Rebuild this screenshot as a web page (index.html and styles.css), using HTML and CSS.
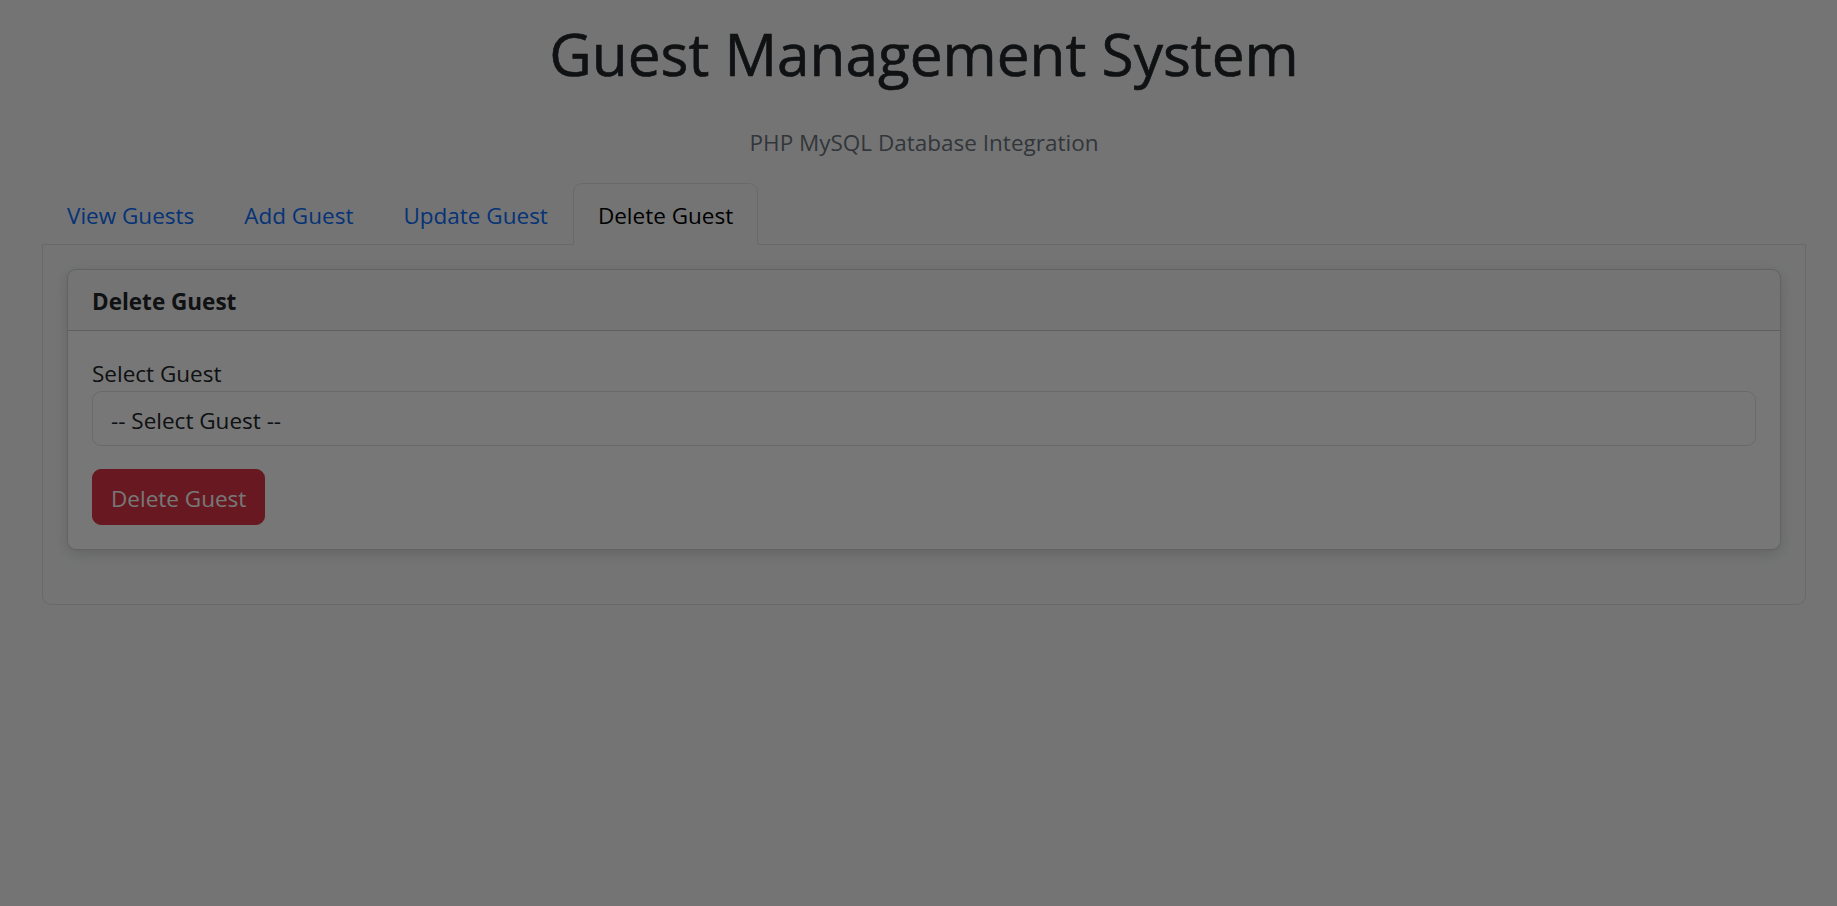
FILE: index.html
```html
<!DOCTYPE html>
<html lang="en">
<head>
<meta charset="utf-8">
<title>Guest Management System</title>
<link rel="stylesheet" href="styles.css">
</head>
<body>
<div class="page">
  <header class="masthead">
    <h1 class="title">Guest Management System</h1>
    <p class="subtitle">PHP MySQL Database Integration</p>
  </header>

  <ul class="tabs">
    <li><a class="tab-link" href="#">View Guests</a></li>
    <li><a class="tab-link" href="#">Add Guest</a></li>
    <li><a class="tab-link" href="#">Update Guest</a></li>
    <li><a class="tab-link active" href="#">Delete Guest</a></li>
  </ul>

  <div class="tab-content">
    <div class="card">
      <div class="card-header">Delete Guest</div>
      <div class="card-body">
        <form class="delete-form">
          <label class="form-label" for="guest">Select Guest</label>
          <select class="form-select" id="guest">
            <option>-- Select Guest --</option>
          </select>
          <button type="button" class="btn-danger">Delete Guest</button>
        </form>
      </div>
    </div>
  </div>
</div>
<div class="backdrop"></div>
</body>
</html>
```

FILE: styles.css
```css
html, body {
  margin: 0;
  padding: 0;
}

body {
  background: #f8f9fa;
  color: #212529;
  font-family: "Open Sans", "Noto Sans", sans-serif;
  font-size: 22.5px;
  line-height: 36px;
  min-height: 906px;
}

.page {
  padding: 0 31px 0 42px;
}

.masthead {
  text-align: center;
  padding-top: 20px;
}

.title {
  margin: 0 0 38px;
  font-size: 58.5px;
  line-height: 67px;
  font-weight: 400;
  -webkit-text-stroke: 0.6px #212529;
  color: #212529;
}

.subtitle {
  margin: 0 0 22px;
  color: #6c757d;
  font-size: 22.5px;
  line-height: 36px;
}

.tabs {
  list-style: none;
  margin: 0;
  padding: 0;
  display: flex;
  border-bottom: 1px solid #dee2e6;
}

.tabs li {
  margin-bottom: -1px;
}

.tab-link {
  display: block;
  padding: 14px 24px 10px;
  border: 1px solid transparent;
  border-radius: 9px 9px 0 0;
  color: #0d6efd;
  text-decoration: none;
}

.tab-link.active {
  color: #000;
  background: #f8f9fa;
  border-color: #dee2e6 #dee2e6 #f8f9fa;
}

.tab-content {
  border: 1px solid #dee2e6;
  border-top: 0;
  border-radius: 0 0 9px 9px;
  padding: 24px;
}

.card {
  background: #fff;
  border: 1px solid rgba(0, 0, 0, 0.175);
  border-radius: 9px;
  margin-bottom: 30px;
  box-shadow: 0 4px 14px rgba(0, 0, 0, 0.14);
}

.card-header {
  padding: 14px 24px 10px;
  background: rgba(33, 37, 41, 0.03);
  border-bottom: 1px solid rgba(0, 0, 0, 0.175);
  border-radius: 8px 8px 0 0;
  font-weight: 700;
}

.card-body {
  padding: 24px;
}

.delete-form {
  display: flex;
  flex-direction: column;
  align-items: flex-start;
  margin: 0;
}

.form-label {
  display: block;
  padding-top: 2px;
  line-height: 34px;
}

.form-select {
  -webkit-appearance: none;
  appearance: none;
  box-sizing: border-box;
  width: 100%;
  height: 55px;
  padding: 4px 18px 0;
  margin: 0 0 23px;
  font: inherit;
  line-height: 36px;
  color: #212529;
  background: #fff;
  border: 1px solid #dee2e6;
  border-radius: 9px;
}

.btn-danger {
  font: inherit;
  line-height: 36px;
  padding: 11px 18px 7px;
  color: #fff;
  background: #dc3545;
  border: 1px solid #dc3545;
  border-radius: 9px;
  cursor: pointer;
}

.backdrop {
  position: fixed;
  inset: 0;
  background: rgba(0, 0, 0, 0.535);
}
```
